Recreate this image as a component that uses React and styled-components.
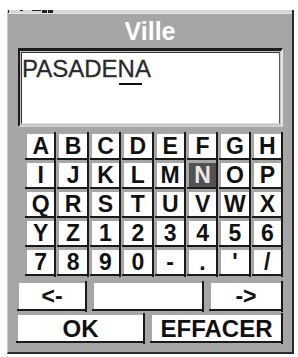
import React from "react";
import styled, { createGlobalStyle } from "styled-components";

const Global = createGlobalStyle`
  html, body { margin: 0; padding: 0; background: #ffffff; }
  body { font-family: "Liberation Sans", Arial, sans-serif; }
`;

const Frame = styled.div`
  box-sizing: border-box;
  margin: 10px 0 0 7px;
  width: 287px;
  height: 344px;
  background: #a6a6a6;
  border-left: 1px solid #c8c8c8;
  border-right: 2px solid #2a2a2a;
  border-bottom: 2px solid #2a2a2a;
  display: flex;
  flex-direction: column;
`;

const StatusStrip = styled.div`
  height: 3px;
  background: #d6d6d6;
  display: flex;
  align-items: flex-start;
  padding-left: 12px;
  gap: 3px;
`;

const Mark = styled.span`
  display: block;
  width: ${(p) => p.$w}px;
  height: ${(p) => p.$h}px;
  margin-left: ${(p) => p.$ml || 0}px;
  background: #222;
`;

const Title = styled.div`
  height: 34px;
  border-top: 1px solid #e4e4e4;
  display: flex;
  align-items: center;
  justify-content: center;
  color: #ffffff;
  font-weight: bold;
  font-size: 25px;
`;

const Body = styled.div`
  display: flex;
  flex-direction: column;
  padding: 0 9px 0 10px;
`;

const TextBox = styled.div`
  box-sizing: border-box;
  height: 79px;
  border-style: solid;
  border-width: 3px 2px 2px 2px;
  border-color: #1c1c1c #e6e6e6 #d0d0d0 #1c1c1c;
  background: #c4c4c4;
  padding: 1px;
  display: flex;
`;

const TextInner = styled.div`
  flex: 1;
  background: #ffffff;
  border-style: solid;
  border-width: 1px;
  border-color: #333 #5a5a5a #e0e0e0 #333;
  padding: 2px 0 0 0;
  font-size: 24px;
  color: #2a2a2a;
  -webkit-text-stroke: 0.3px #2a2a2a;
  line-height: normal;
  white-space: pre;
`;

const CursorChar = styled.span`
  position: relative;
  &::after {
    content: "";
    position: absolute;
    left: 1px;
    width: 23px;
    top: 28px;
    height: 2px;
    background: #111;
  }
`;

const Keys = styled.div`
  margin: 7px 0 0 9px;
  display: grid;
  grid-template-columns: repeat(8, 1fr);
  grid-auto-rows: 26px;
  gap: 3px;
`;

const Key = styled.div`
  position: relative;
  box-sizing: border-box;
  background: ${(p) => (p.$active ? "#525252" : "#ffffff")};
  color: ${(p) => (p.$active ? "#e8e8e8" : "#111")};
  border-right: 2px solid #1a1a1a;
  border-bottom: 2px solid #1a1a1a;
  display: flex;
  align-items: center;
  justify-content: center;
  font-weight: bold;
  font-size: ${(p) => p.$size || 23}px;
  line-height: 1;
  padding-top: 1px;
  &::before {
    content: "";
    position: absolute;
    right: -2px;
    top: -2px;
    bottom: -3px;
    width: 2px;
    background: #1a1a1a;
  }
  &::after {
    content: "";
    position: absolute;
    left: -2px;
    right: 0;
    bottom: -2px;
    height: 2px;
    background: #1a1a1a;
  }
`;

const NavRow = styled.div`
  margin: 7px 0 0 1px;
  height: 28px;
  display: grid;
  grid-template-columns: 68px 1fr 72px;
  gap: 7px;
`;

const ActionRow = styled.div`
  margin-top: 4px;
  height: 28px;
  display: grid;
  grid-template-columns: 127px 1fr;
  gap: 7px;
`;

const keys = [
  "A", "B", "C", "D", "E", "F", "G", "H",
  "I", "J", "K", "L", "M", "N", "O", "P",
  "Q", "R", "S", "T", "U", "V", "W", "X",
  "Y", "Z", "1", "2", "3", "4", "5", "6",
  "7", "8", "9", "0", "-", ".", "'", "/",
];

export default function App() {
  return (
    <>
      <Global />
      <Frame>
        <StatusStrip>
          <Mark $w={1} $h={3} $ml={-12} />
          <Mark $w={3} $h={1} $ml={8} />
          <Mark $w={9} $h={1} $ml={6} />
          <Mark $w={5} $h={3} $ml={-2} />
          <Mark $w={5} $h={3} $ml={-2} />
        </StatusStrip>
        <Title>Ville</Title>
        <Body>
          <TextBox>
            <TextInner>
              PASADE<CursorChar>N</CursorChar>A
            </TextInner>
          </TextBox>
          <Keys>
            {keys.map((k, i) => (
              <Key key={i} $active={k === "N"}>
                {k}
              </Key>
            ))}
          </Keys>
          <NavRow>
            <Key>{"<-"}</Key>
            <Key />
            <Key>{"->"}</Key>
          </NavRow>
          <ActionRow>
            <Key $size={24}>OK</Key>
            <Key $size={24}>EFFACER</Key>
          </ActionRow>
        </Body>
      </Frame>
    </>
  );
}
